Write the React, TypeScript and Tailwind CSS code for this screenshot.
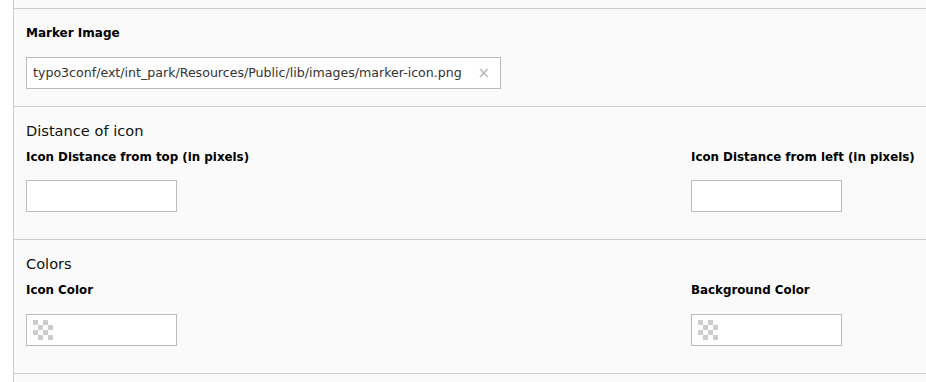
import React from "react";

const font = { fontFamily: '"DejaVu Sans", Verdana, sans-serif' };

function Checker() {
  const cells = [];
  for (let r = 0; r < 4; r++) {
    for (let c = 0; c < 4; c++) {
      cells.push(
        <div key={`${r}-${c}`} className={(r + c) % 2 === 0 ? "bg-[#cccccc]" : "bg-white"} />
      );
    }
  }
  return <div className="grid grid-cols-4 grid-rows-4 w-[20px] h-[20px]">{cells}</div>;
}

function TextBox({ color }: { color?: boolean }) {
  return (
    <div className="w-[151px] h-[32px] bg-white border border-[#bbbbbb] flex items-center pl-[6px]">
      {color ? <Checker /> : null}
    </div>
  );
}

function Field({ label, color }: { label: string; color?: boolean }) {
  return (
    <div>
      <div className="text-[11.85px] font-bold text-black leading-[15px]">{label}</div>
      <div className={color ? "mt-[16px]" : "mt-[15px]"}>
        <TextBox color={color} />
      </div>
    </div>
  );
}

function Section({ title, left, right, color }: { title: string; left: string; right: string; color?: boolean }) {
  return (
    <div className="border-t border-[#cccccc] pt-[14px] pb-[27px] pl-[12px]">
      <div className="text-[14.6px] text-[#111] leading-[20px]">{title}</div>
      <div className="grid grid-cols-[665px_1fr] mt-[9px]">
        <Field label={left} color={color} />
        <Field label={right} color={color} />
      </div>
    </div>
  );
}

export default function App() {
  return (
    <div className="w-[926px] h-[382px] bg-white pl-[13px] overflow-hidden" style={font}>
      <div className="border-l border-[#cccccc] bg-[#fafafa] h-full">
        <div className="h-[8px]" />
        <div className="border-t border-[#cccccc] pt-[17px] pb-[17px] pl-[12px]">
          <div className="text-[12px] font-bold text-black leading-[15px]">Marker Image</div>
          <div className="mt-[16px] w-[475px] h-[32px] bg-white border border-[#bbbbbb] flex items-center pl-[6px] pr-[10px]">
            <span className="text-[12.6px] text-[#333] flex-1 whitespace-nowrap">
              typo3conf/ext/int_park/Resources/Public/lib/images/marker-icon.png
            </span>
            <span className="text-[15px] text-[#b5b5b5] leading-none">×</span>
          </div>
        </div>
        <Section
          title="Distance of icon"
          left="Icon Distance from top (in pixels)"
          right="Icon Distance from left (in pixels)"
        />
        <Section title="Colors" left="Icon Color" right="Background Color" color />
        <div className="border-t border-[#cccccc]" />
      </div>
    </div>
  );
}
